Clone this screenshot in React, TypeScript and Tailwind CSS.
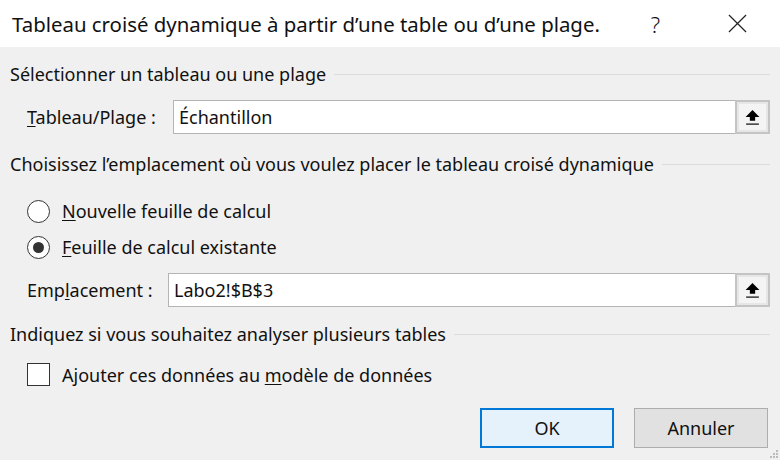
import React from "react";

const font = { fontFamily: '"Noto Sans", "Open Sans", sans-serif' };

function Section({ title }: { title: string }) {
  return (
    <div className="flex items-center gap-2 h-[22px]">
      <span className="whitespace-nowrap">{title}</span>
      <div className="flex-1 h-px bg-[#dcdcdc]" />
    </div>
  );
}

function CollapseIcon() {
  return (
    <svg viewBox="0 0 16 16" className="h-[17px] w-[17px]">
      <path d="M8 1 L14.5 7.5 L10.5 7.5 L10.5 11 L5.5 11 L5.5 7.5 L1.5 7.5 Z" fill="#000" />
      <rect x="2" y="13.5" width="12" height="1.5" fill="#444" />
    </svg>
  );
}

function RefInput({ value }: { value: string }) {
  return (
    <div className="flex flex-1 h-[34px]">
      <div className="flex-1 flex items-center bg-white border border-[#b4b4b4] border-r-0 pl-[5px]">
        {value}
      </div>
      <div className="w-[35px] flex items-center justify-center bg-[#e6e6e6] border-2 border-[#c4c4c4]">
        <div className="w-[27px] h-[26px] flex items-center justify-center bg-[#f4f4f4]">
          <CollapseIcon />
        </div>
      </div>
    </div>
  );
}

function Radio({ checked, label, u }: { checked: boolean; label: string; u: string }) {
  return (
    <div className="flex items-center h-[24px]">
      <div className="w-[23px] h-[23px] ml-[27px] rounded-full border-[1.5px] border-[#333] bg-white flex items-center justify-center">
        {checked && <div className="w-[11px] h-[11px] rounded-full bg-[#333]" />}
      </div>
      <span className="ml-[12px]">
        <span className="underline underline-offset-2">{u}</span>
        {label}
      </span>
    </div>
  );
}

export default function App() {
  return (
    <div className="w-[780px] h-[460px] bg-[#f0f0f0] text-[#111] text-[18px] leading-[22px] flex flex-col relative overflow-hidden" style={font}>
      <div className="h-[47px] bg-white flex items-center shrink-0">
        <span className="pl-[12px] text-[20.4px] flex-1 whitespace-nowrap">
          Tableau croisé dynamique à partir d’une table ou d’une plage.
        </span>
        <span className="text-[22px] font-light mr-[68px]">?</span>
        <svg viewBox="0 0 20 20" className="w-[19px] h-[19px] mr-[33px]" stroke="#222" strokeWidth="1.3">
          <path d="M1 1 L19 19 M19 1 L1 19" />
        </svg>
      </div>

      <div className="flex flex-col pl-[10px] pr-[10px]">
        <div className="mt-[16px]">
          <Section title="Sélectionner un tableau ou une plage" />
        </div>
        <div className="flex items-center mt-[15px]">
          <span className="ml-[17px] w-[146px]">
            <span className="underline underline-offset-2">T</span>ableau/Plage :
          </span>
          <RefInput value="Échantillon" />
        </div>

        <div className="mt-[19px]">
          <Section title="Choisissez l’emplacement où vous voulez placer le tableau croisé dynamique" />
        </div>
        <div className="mt-[24px] flex flex-col gap-[12px] -ml-[10px]">
          <Radio checked={false} u="N" label="ouvelle feuille de calcul" />
          <Radio checked={true} u="F" label="euille de calcul existante" />
        </div>
        <div className="flex items-center mt-[14px]">
          <span className="ml-[17px] w-[141px]">
            Emp<span className="underline underline-offset-2">l</span>acement :
          </span>
          <RefInput value="Labo2!$B$3" />
        </div>

        <div className="mt-[16px]">
          <Section title="Indiquez si vous souhaitez analyser plusieurs tables" />
        </div>
        <div className="flex items-center mt-[18px]">
          <div className="w-[23px] h-[23px] ml-[17px] border-[1.5px] border-[#333] bg-white" />
          <span className="ml-[12px]">
            Ajouter ces données au <span className="underline underline-offset-2">m</span>odèle de données
          </span>
        </div>

        <div className="flex justify-end gap-[20px] mt-[22px] pr-[2px]">
          <div className="w-[134px] h-[40px] flex items-center justify-center bg-[#e5f1fb] border-2 border-[#0078d7]">
            OK
          </div>
          <div className="w-[134px] h-[40px] flex items-center justify-center bg-[#e1e1e1] border border-[#adadad]">
            Annuler
          </div>
        </div>
      </div>

      <div className="absolute right-[2px] bottom-[2px] grid grid-cols-3 gap-[1px]">
        <div className="w-[2px] h-[2px]" />
        <div className="w-[2px] h-[2px]" />
        <div className="w-[2px] h-[2px] bg-[#bbb]" />
        <div className="w-[2px] h-[2px]" />
        <div className="w-[2px] h-[2px] bg-[#bbb]" />
        <div className="w-[2px] h-[2px] bg-[#bbb]" />
        <div className="w-[2px] h-[2px] bg-[#bbb]" />
        <div className="w-[2px] h-[2px] bg-[#bbb]" />
        <div className="w-[2px] h-[2px] bg-[#bbb]" />
      </div>
    </div>
  );
}
